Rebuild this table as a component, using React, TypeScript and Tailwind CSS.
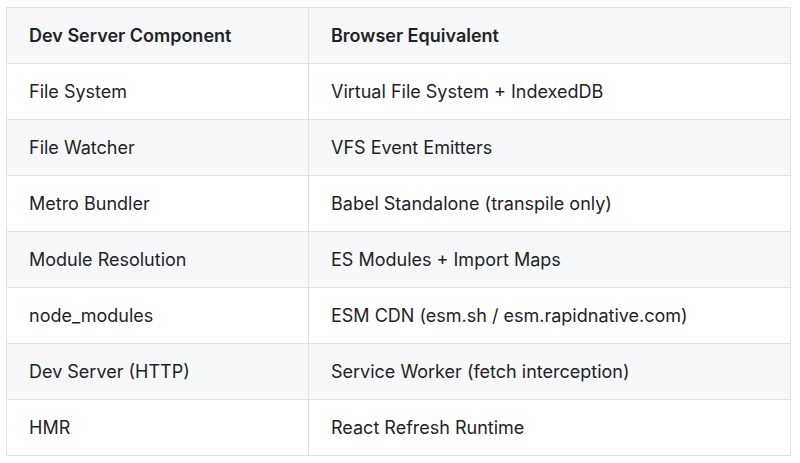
const rows: [string, string][] = [
  ["File System", "Virtual File System + IndexedDB"],
  ["File Watcher", "VFS Event Emitters"],
  ["Metro Bundler", "Babel Standalone (transpile only)"],
  ["Module Resolution", "ES Modules + Import Maps"],
  ["node_modules", "ESM CDN (esm.sh / esm.rapidnative.com)"],
  ["Dev Server (HTTP)", "Service Worker (fetch interception)"],
  ["HMR", "React Refresh Runtime"],
];

// Markdown-style comparison table, GitHub look.
export default function App() {
  return (
    <div className="min-h-[463px] bg-white pl-[6px] pt-[7px] font-['Inter','Liberation_Sans',sans-serif] text-[18px] text-[#1f2328]">
      <table className="w-[785px] border-collapse">
        <thead>
          <tr className="bg-[#f6f8fa]">
            <th className="h-[56px] w-[302px] border border-[#dfe2e5] px-[22px] text-left font-semibold">
              Dev Server Component
            </th>
            <th className="h-[56px] border border-[#dfe2e5] px-[22px] text-left font-semibold">Browser Equivalent</th>
          </tr>
        </thead>
        <tbody>
          {rows.map(([a, b], i) => (
            <tr key={a} className={i % 2 === 1 ? "bg-[#f6f8fa]" : "bg-white"}>
              <td className="h-[56px] border border-[#dfe2e5] px-[22px]">{a}</td>
              <td className="h-[56px] border border-[#dfe2e5] px-[22px]">{b}</td>
            </tr>
          ))}
        </tbody>
      </table>
    </div>
  );
}
